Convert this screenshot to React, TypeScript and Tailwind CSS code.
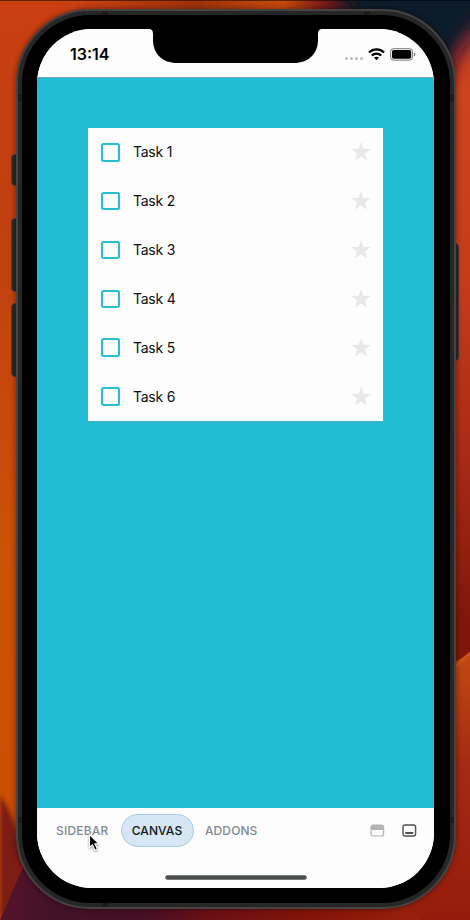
import React from 'react';

const tasks = ['Task 1', 'Task 2', 'Task 3', 'Task 4', 'Task 5', 'Task 6'];

function Wallpaper() {
  return (
    <svg className="absolute inset-0" width="470" height="920" viewBox="0 0 470 920">
      <defs>
        <linearGradient id="left" x1="0" y1="0" x2="0" y2="1">
          <stop offset="0" stopColor="#c93f12" />
          <stop offset="0.25" stopColor="#c0400f" />
          <stop offset="0.47" stopColor="#c9490c" />
          <stop offset="0.6" stopColor="#cb5206" />
          <stop offset="1" stopColor="#cb4c05" />
        </linearGradient>
        <linearGradient id="right" x1="0" y1="0" x2="0" y2="1">
          <stop offset="0.05" stopColor="#cc4520" />
          <stop offset="0.3" stopColor="#c63c1b" />
          <stop offset="0.5" stopColor="#a82a14" />
          <stop offset="0.68" stopColor="#7e160b" />
          <stop offset="0.72" stopColor="#7e160b" />
        </linearGradient>
        <linearGradient id="lowerRight" x1="0" y1="0" x2="0" y2="1">
          <stop offset="0" stopColor="#c24a12" />
          <stop offset="0.4" stopColor="#a72b12" />
          <stop offset="1" stopColor="#951c0c" />
        </linearGradient>
        <linearGradient id="top" x1="0" y1="0" x2="1" y2="0">
          <stop offset="0" stopColor="#c93f12" />
          <stop offset="0.3" stopColor="#9f330c" />
          <stop offset="0.52" stopColor="#c84a08" />
          <stop offset="0.62" stopColor="#7c1c18" />
          <stop offset="0.72" stopColor="#1b1526" />
          <stop offset="0.8" stopColor="#04182a" />
          <stop offset="1" stopColor="#071a2c" />
        </linearGradient>
        <linearGradient id="bottom" x1="0" y1="0" x2="1" y2="0">
          <stop offset="0" stopColor="#561329" />
          <stop offset="0.12" stopColor="#431228" />
          <stop offset="0.34" stopColor="#470f24" />
          <stop offset="0.5" stopColor="#6b1015" />
          <stop offset="0.75" stopColor="#851409" />
          <stop offset="1" stopColor="#9b210c" />
        </linearGradient>
        <filter id="soft" x="-50%" y="-50%" width="200%" height="200%">
          <feGaussianBlur stdDeviation="7" />
        </filter>
        <filter id="slight">
          <feGaussianBlur stdDeviation="2" />
        </filter>
      </defs>
      <rect width="240" height="920" fill="url(#left)" />
      <rect x="235" width="235" height="920" fill="url(#right)" />
      <rect x="80" width="390" height="30" fill="url(#top)" />
      <path d="M325 -20H490V22Q455 50 440 85L380 30Z" fill="#071a2c" filter="url(#soft)" />
      <path d="M490 18Q462 32 452 75" stroke="#7d1c2e" strokeWidth="9" fill="none" filter="url(#soft)" />
      <path d="M430 680L470 652V920H300Z" fill="url(#lowerRight)" />
      <path d="M430 691L470 653" stroke="#cf5514" strokeWidth="2" />
      <path d="M0 795Q14 815 22 850L60 900L0 920Z" fill="#7e1c16" filter="url(#slight)" />
      <path d="M0 920L24 865L80 900H400L420 920Z" fill="url(#bottom)" />
      <rect width="470" height="1" fill="#000" fillOpacity="0.5" />
    </svg>
  );
}

function WifiIcon() {
  return (
    <svg width="17" height="13" viewBox="0 0 17 13" fill="none" stroke="#000" strokeWidth="2.3">
      <path d="M1 4.5C5.2 .3 11.8 .3 16 4.5" />
      <path d="M3.8 7.5C6.5 4.9 10.5 4.9 13.2 7.5" />
      <path d="M6 9.6Q8.5 7.7 11 9.6L8.5 12.3Z" fill="#000" stroke="none" />
    </svg>
  );
}

function BatteryIcon() {
  return (
    <svg width="26" height="13" viewBox="0 0 26 13">
      <rect x=".6" y=".7" width="22" height="11.4" rx="3" fill="none" stroke="#777" />
      <rect x="2" y="2.1" width="19.2" height="8.6" rx="1.7" fill="#000" />
      <path d="M24 4.5Q25.3 5 25.3 6.4T24 8.3Z" fill="#777" />
    </svg>
  );
}

function Star() {
  return (
    <svg className="mb-px" width="20" height="19" viewBox="0 0 20 19" fill="#e7e8ea">
      <path d="M10 0L12.4 6.7L19.7 7L14 11.4L16 18.4L10 14.4L4 18.4L6 11.4L.3 7L7.6 6.7Z" />
    </svg>
  );
}

function StatusBar() {
  return (
    <header className="relative flex h-[49px] shrink-0 items-center justify-between border-b border-[#6faab4] bg-[#fdfdfd] pl-[33px] pr-[18px] pt-[2px]">
      <svg className="absolute left-[112px] top-0" width="174" height="35" viewBox="0 0 174 35">
        <path d="M0 0Q4 0 4 5V11C4 25 14 34 28 34H145C159 34 169 25 169 11V5Q169 0 173 0Z" fill="#000" />
      </svg>
      <span className="text-base font-semibold leading-5 text-black">13:14</span>
      <div className="flex items-center">
        <div className="mr-[5px] mt-[8px] flex gap-[2px]">
          <i className="size-[3px] rounded-full bg-[#bcbcbc]" />
          <i className="size-[3px] rounded-full bg-[#bcbcbc]" />
          <i className="size-[3px] rounded-full bg-[#bcbcbc]" />
          <i className="size-[3px] rounded-full bg-[#bcbcbc]" />
        </div>
        <WifiIcon />
        <div className="ml-[5px]">
          <BatteryIcon />
        </div>
      </div>
    </header>
  );
}

function TaskList() {
  return (
    <ul className="flex h-[293px] flex-col bg-[#fdfdfd] shadow-[0.5px_0.5px_0_#7fa3aa]">
      {tasks.map((task) => (
        <li key={task} className="flex flex-1 items-center pl-[13px] pr-3">
          <span className="size-[18.5px] rounded-[2.5px] border-2 border-[#27bfd6]" />
          <span className="ml-[13.5px] flex-1 text-sm leading-5 tracking-[-0.25px] text-[#0c0d10]">{task}</span>
          <Star />
        </li>
      ))}
    </ul>
  );
}

function BottomBar() {
  return (
    <footer className="flex h-20 shrink-0 flex-col items-center bg-[#fdfdfd]">
      <nav className="mt-1.5 flex h-[33px] w-full items-center pl-[19px] pr-[17px] text-xs font-medium text-[#818a91]">
        <span className="w-[64.5px] pt-px tracking-[0.2px]">SIDEBAR</span>
        <span className="flex h-[33px] w-[73px] items-center justify-center rounded-full border border-[#a9cbe4] bg-[#d6e6f5] pt-px font-medium tracking-[0.1px] text-[#0d1720]">
          CANVAS
        </span>
        <span className="ml-[11.5px] flex-1 pt-px tracking-[0.1px]">ADDONS</span>
        <svg className="mr-[17px]" width="15" height="13" viewBox="0 0 15 13">
          <rect x="1" y="1" width="12.6" height="11" rx="2" fill="none" stroke="#b3b4b6" strokeWidth="1.2" />
          <path d="M1 6V3Q1 1 3 1H11.6Q13.6 1 13.6 3V6Z" fill="#b3b4b6" />
        </svg>
        <svg width="15" height="13" viewBox="0 0 15 13" fill="none" stroke="#4b4e52">
          <rect x="1" y="1" width="12.6" height="11" rx="2" strokeWidth="1.4" />
          <path d="M3.3 9H11.3" strokeWidth="1.8" />
        </svg>
      </nav>
      <div className="mt-[28px] h-[5px] w-[142px] rounded-full border border-[#777a7b] bg-[#4b4d4e]" />
    </footer>
  );
}

function Pointer() {
  return (
    <svg
      className="absolute left-[88px] top-[833px] drop-shadow-[0_1px_1px_rgba(0,0,0,0.4)]"
      width="13"
      height="20"
      viewBox="0 0 13 20"
    >
      <path
        d="M1.5 1.5V14.5L4.5 11.8L6.9 17.2L9.3 16.1L6.9 10.9H11Z"
        fill="#000"
        stroke="#fff"
        strokeWidth="1.1"
      />
    </svg>
  );
}

function SideButtons() {
  return (
    <>
      <i className="absolute left-[11px] top-[154px] h-8 w-[6px] rounded-l-sm border border-[#4b403b] bg-[#2b2a2a]" />
      <i className="absolute left-[11px] top-[218px] h-[74px] w-[6px] rounded-l-sm border border-[#4b403b] bg-[#2b2a2a]" />
      <i className="absolute left-[11px] top-[303px] h-[74px] w-[6px] rounded-l-sm border border-[#4b403b] bg-[#2b2a2a]" />
      <i className="absolute left-[454px] top-[243px] h-[118px] w-[5px] rounded-r-sm border border-[#4b302b] bg-[#2b2a2a]" />
    </>
  );
}

function AntennaBands() {
  return (
    <>
      <i className="absolute left-0 top-[84px] h-[6px] w-[4px] bg-[#1d1c1c]" />
      <i className="absolute right-0 top-[84px] h-[6px] w-[4px] bg-[#1d1c1c]" />
      <i className="absolute left-0 top-[806px] h-[6px] w-[4px] bg-[#1d1c1c]" />
      <i className="absolute right-0 top-[806px] h-[6px] w-[4px] bg-[#1d1c1c]" />
      <i className="absolute left-[84px] top-0 h-[4px] w-[6px] bg-[#1d1c1c]" />
      <i className="absolute right-[84px] top-0 h-[4px] w-[6px] bg-[#1d1c1c]" />
      <i className="absolute bottom-0 left-[84px] h-[4px] w-[6px] bg-[#1d1c1c]" />
    </>
  );
}

export default function App() {
  return (
    <main className="relative h-[920px] w-[470px] overflow-hidden pl-[16px] pt-[9px] font-['Inter',sans-serif]">
      <Wallpaper />
      <SideButtons />
      <div className="relative h-[900px] w-[440px] rounded-[74px] border-2 border-[#464342] bg-[#272626] p-[4px] shadow-[0_0_5px_1px_rgba(0,0,0,0.35)]">
        <AntennaBands />
        <div className="h-[888px] w-[428px] rounded-[68px] bg-black px-[15px] py-[14px]">
          <div className="flex h-[859px] w-[397px] flex-col overflow-hidden rounded-[55px] bg-[#fdfdfd]">
            <StatusBar />
            <section className="flex-1 bg-[#22bbd4] px-[51px] pt-[50px]">
              <TaskList />
            </section>
            <BottomBar />
          </div>
        </div>
      </div>
      <Pointer />
    </main>
  );
}
